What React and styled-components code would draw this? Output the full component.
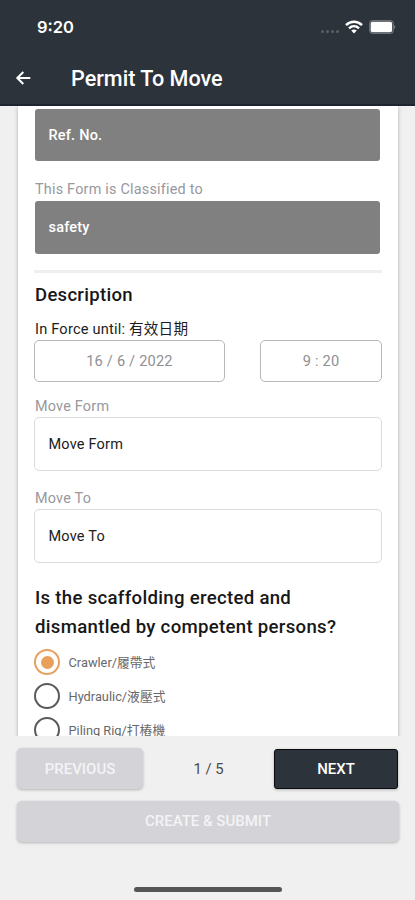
import styled, { createGlobalStyle } from 'styled-components'

const options = ['Crawler/履帶式', 'Hydraulic/液壓式', 'Piling Rig/打樁機']

function App() {
	return (
		<Screen>
			<GlobalStyle />
			<Header>
				<StatusBar>
					<Time>9:20</Time>
					<StatusIcons>
						<Signal>
							<i />
							<i />
							<i />
							<i />
						</Signal>
						<WifiIcon />
						<BatteryIcon />
					</StatusIcons>
				</StatusBar>
				<NavBar>
					<BackIcon />
					<Title>Permit To Move</Title>
				</NavBar>
			</Header>

			<Content>
				<Card>
					<Field $filled>Ref. No.</Field>
					<Label $space='16px 1px 0'>This Form is Classified to</Label>
					<Field $filled>safety</Field>
					<Divider />
					<Heading>Description</Heading>
					<Caption>
						In Force until: <span>有效日期</span>
					</Caption>
					<DateRow>
						<DateBox $width='191px'>16 / 6 / 2022</DateBox>
						<DateBox $width='122px'>9 : 20</DateBox>
					</DateRow>
					<Label $space='12px 1px -1px'>Move Form</Label>
					<Field>Move Form</Field>
					<Label $space='15px 1px -1px'>Move To</Label>
					<Field>Move To</Field>
					<Question>
						Is the scaffolding erected and
						<br />
						dismantled by competent persons?
					</Question>
					{options.map((option, index) => (
						<Option key={option}>
							<Radio $checked={index === 0} />
							<OptionText>{option}</OptionText>
						</Option>
					))}
				</Card>
			</Content>

			<Footer>
				<Pager>
					<Button disabled>PREVIOUS</Button>
					<PageNumber>1 / 5</PageNumber>
					<Button>NEXT</Button>
				</Pager>
				<SubmitButton disabled>CREATE &amp; SUBMIT</SubmitButton>
				<HomeIndicator />
			</Footer>
		</Screen>
	)
}

export default App

function WifiIcon() {
	return (
		<svg width='18' height='14' viewBox='0 0 18 14' fill='none' stroke='#fff' strokeWidth='2.5'>
			<path d='M1 5.2C5.6 .7 12.4 .7 17 5.2' />
			<path d='M4 8.3C6.9 5.5 11.1 5.5 14 8.3' />
			<path d='M6.2 10.6C7.9 9.1 10.1 9.1 11.8 10.6L9 13.5Z' fill='#fff' stroke='none' />
		</svg>
	)
}

function BatteryIcon() {
	return (
		<svg width='27' height='14' viewBox='0 0 27 14' fill='none'>
			<rect x='.7' y='.7' width='23.6' height='12.6' rx='3.4' stroke='#6d7177' strokeWidth='1.2' />
			<rect x='1.7' y='1.8' width='21.4' height='10.4' rx='2' fill='#fff' />
			<path d='M25.3 5V9C26.6 8.5 26.6 5.5 25.3 5Z' fill='#8f9296' />
		</svg>
	)
}

function BackIcon() {
	return (
		<svg width='16' height='16' viewBox='0 0 16 16' fill='none' stroke='#fff' strokeWidth='2'>
			<path d='M15.3 8H2.4M8.3 2L2.3 8L8.3 14' />
		</svg>
	)
}

const GlobalStyle = createGlobalStyle`
	* {
		box-sizing: border-box;
	}

	body {
		margin: 0;
		font-family: Roboto, 'Noto Sans CJK TC', sans-serif;
	}
`
const Screen = styled.div`
	width: 415px;
	height: 900px;
	display: flex;
	flex-direction: column;
	overflow: hidden;
	background-color: #f0f0f0;
`
const Header = styled.header`
	height: 106px;
	flex-shrink: 0;
	color: #ffffff;
	background-color: #2d333b;
	border-bottom: 2px solid #1f252e;
`
const StatusBar = styled.div`
	height: 54px;
	padding: 0 19px 0 37px;
	display: flex;
	align-items: center;
	justify-content: space-between;
`
const Time = styled.span`
	font-family: Inter, sans-serif;
	font-size: 16.5px;
	font-weight: 600;
`
const StatusIcons = styled.div`
	display: flex;
	align-items: center;
	gap: 6px;
`
const Signal = styled.div`
	display: flex;
	gap: 2px;
	padding-top: 9px;

	i {
		width: 3px;
		height: 3px;
		border-radius: 50%;
		background-color: #5b6067;
	}
`
const NavBar = styled.div`
	height: 48px;
	padding-left: 15px;
	display: flex;
	align-items: center;
	gap: 40px;
`
const Title = styled.h1`
	margin: 0;
	font-size: 21.6px;
	font-weight: 500;
`
const Content = styled.main`
	height: 630px;
	padding: 0 17px 0 18px;
	flex-shrink: 0;
	overflow: hidden;
`
const Card = styled.section`
	height: 700px;
	padding: 3px 16px 0;
	background-color: #ffffff;
	box-shadow: 0 1px 4px rgba(0, 0, 0, 0.28);
`
const Field = styled.div`
	height: ${({ $filled }) => ($filled ? '52.4px' : '54px')};
	margin: ${({ $filled }) => ($filled ? '0 1.6px 0 1px' : '0')};
	padding-left: 13.5px;
	display: flex;
	align-items: center;
	border: ${({ $filled }) => ($filled ? 'none' : '1px solid #dcdcdd')};
	border-radius: ${({ $filled }) => ($filled ? '3px' : '5px')};
	color: ${({ $filled }) => ($filled ? '#ffffff' : '#202020')};
	background-color: ${({ $filled }) => ($filled ? '#808080' : '#ffffff')};
	font-size: 14.5px;
	font-weight: ${({ $filled }) => ($filled ? 500 : 400)};
	letter-spacing: 0.2px;
`
const Label = styled.div`
	height: 24px;
	margin: ${({ $space }) => $space};
	color: #98989d;
	font-size: 14.4px;
	line-height: 25px;
	letter-spacing: 0.22px;
`
const Divider = styled.div`
	height: 3px;
	margin-top: 15.9px;
	background-color: #eeeeee;
`
const Heading = styled.h2`
	height: 26px;
	margin: 9.5px 1px 0;
	color: #171717;
	font-size: 18.5px;
	font-weight: 500;
	line-height: 26px;
	letter-spacing: 0.3px;
`
const Caption = styled.div`
	height: 22px;
	margin: 10px 1px 0;
	color: #1c1c1c;
	font-size: 14.6px;
	line-height: 22px;
	letter-spacing: 0.2px;
	white-space: nowrap;
`
const DateRow = styled.div`
	display: flex;
	justify-content: space-between;
`
const DateBox = styled.div`
	width: ${({ $width }) => $width};
	height: 42px;
	display: grid;
	place-items: center;
	border: 1px solid #b8b8b9;
	border-radius: 5px;
	color: #8f8f93;
	font-size: 14.6px;
	letter-spacing: 0.2px;
`
const Question = styled.h2`
	margin: 21px 1px 3px;
	color: #171717;
	font-size: 18.6px;
	font-weight: 500;
	line-height: 29px;
	letter-spacing: 0.3px;
	white-space: nowrap;
`
const Option = styled.div`
	height: 34px;
	display: flex;
	align-items: center;
	gap: 8.5px;
`
const Radio = styled.span`
	width: 26px;
	height: 26px;
	display: grid;
	place-items: center;
	border: 2px solid ${({ $checked }) => ($checked ? '#e9a05c' : '#5a5a5d')};
	border-radius: 50%;

	&::after {
		content: '';
		width: 13px;
		height: 13px;
		border-radius: 50%;
		background-color: ${({ $checked }) => ($checked ? '#e9a05c' : 'transparent')};
	}
`
const OptionText = styled.span`
	padding-bottom: 2px;
	color: #68686b;
	font-size: 12.8px;
`
const Footer = styled.footer`
	padding: 12px 16px 0 17px;
	display: flex;
	flex-direction: column;
	gap: 12px;
`
const Pager = styled.div`
	display: grid;
	grid-template-columns: 126px 1fr 124px;
	align-items: center;
	padding-right: 1px;
`
const Button = styled.button`
	height: ${({ disabled }) => (disabled ? '41px' : '40px')};
	padding: 0;
	border: ${({ disabled }) => (disabled ? 'none' : '1px solid #080c12')};
	border-radius: ${({ disabled }) => (disabled ? '5px' : '3px')};
	color: ${({ disabled }) => (disabled ? '#f3f3f5' : '#ffffff')};
	background-color: ${({ disabled }) => (disabled ? '#d3d3d8' : '#2d333b')};
	box-shadow: 0 1px 3px rgba(0, 0, 0, 0.25);
	font-family: inherit;
	font-size: 15px;
	font-weight: 500;
`
const SubmitButton = styled(Button)`
	padding-bottom: 2px;
`
const PageNumber = styled.span`
	color: #4b4b4b;
	font-size: 14.8px;
	text-align: center;
`
const HomeIndicator = styled.div`
	width: 148px;
	height: 5px;
	margin: 33px 0 0 117px;
	border-radius: 3px;
	background-color: #555555;
`
